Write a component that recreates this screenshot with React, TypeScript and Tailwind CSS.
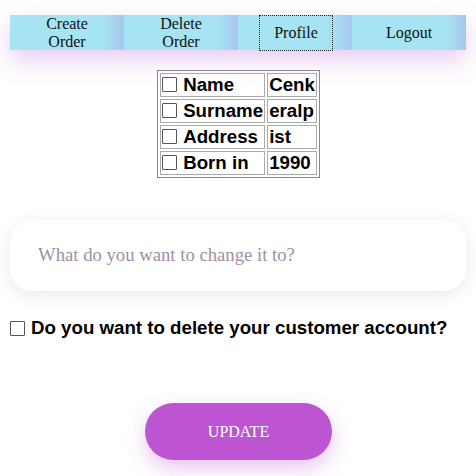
import React from 'react';

const navItems = [
  { label: 'Create\nOrder' },
  { label: 'Delete\nOrder' },
  { label: 'Profile', focused: true },
  { label: 'Logout' },
];

const rows = [
  ['Name', 'Cenk'],
  ['Surname', 'eralp'],
  ['Address', 'ist'],
  ['Born in', '1990'],
];

const Box: React.FC = () => (
  <span className="inline-block w-[15px] h-[15px] border border-[#555] bg-white rounded-[1px] mr-[6px] align-[-1px]" />
);

export default function App() {
  return (
    <div className="w-[476px] h-[476px] bg-white overflow-hidden relative font-['Liberation_Serif',serif]">
      {/* Nav */}
      <div className="pt-[15px] px-[10px]">
        <nav className="flex h-[35px] shadow-[0_10px_25px_rgba(205,140,225,0.45)]">
          {navItems.map((item) => (
            <div
              key={item.label}
              className="flex-1 flex items-center justify-center bg-[linear-gradient(90deg,#a7e4f3_0%,#a7e4f3_82%,#a9c6ee_100%)] text-[16px] leading-[18px] text-[#111] text-center whitespace-pre-line"
            >
              {item.focused ? (
                <span className="w-[72px] py-[8px] outline-1 outline-dotted outline-[#222] ml-[2px]">{item.label}</span>
              ) : (
                <span>{item.label}</span>
              )}
            </div>
          ))}
        </nav>
      </div>

      {/* Profile table */}
      <div className="flex justify-center mt-[20px] ml-[1px]">
        <table className="border border-[#888] border-separate border-spacing-[2px] font-['Liberation_Sans',Arial,sans-serif] font-bold text-[18.7px] text-black">
          <tbody>
            {rows.map(([k, v]) => (
              <tr key={k}>
                <td className="border border-[#aaa] px-[1px] h-[24px] leading-[20px] whitespace-nowrap">
                  <Box />
                  {k}
                </td>
                <td className="border border-[#aaa] px-[1px] h-[24px] leading-[20px] w-[49px]">{v}</td>
              </tr>
            ))}
          </tbody>
        </table>
      </div>

      {/* Input */}
      <div className="px-[10px] mt-[42px]">
        <div className="h-[71px] rounded-[22px] bg-white shadow-[0_4px_18px_rgba(0,0,0,0.09)] flex items-center pl-[28px]">
          <span className="text-[18.7px] text-[#a18fa8]">What do you want to change it to?</span>
        </div>
      </div>

      {/* Delete */}
      <div className="px-[10px] mt-[23px] flex items-center font-['Liberation_Sans',Arial,sans-serif] font-bold text-[18.7px] text-black">
        <span className="inline-block w-[15px] h-[15px] border border-[#555] bg-white rounded-[1px] mr-[6px]" />
        Do you want to delete your customer account?
      </div>

      {/* Update */}
      <div className="flex justify-center mt-[61px]">
        <button className="w-[187px] h-[57px] rounded-full bg-[#bd55d2] text-white text-[16px] font-['Liberation_Serif',serif] shadow-[0_8px_20px_rgba(190,85,210,0.35)] ml-[1px]">
          UPDATE
        </button>
      </div>
    </div>
  );
}
